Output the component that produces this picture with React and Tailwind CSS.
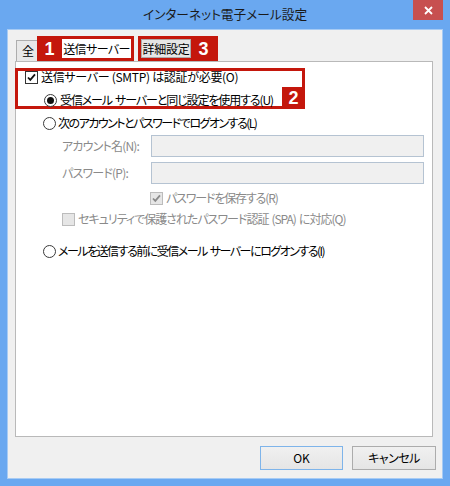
import React from 'react';

// インターネット電子メール設定 ダイアログ（送信サーバー タブ）
const jp = "font-['Noto_Sans_CJK_JP','Noto_Sans',sans-serif] [font-feature-settings:'palt']";

function Check({ disabled = false, checked = false }) {
  return (
    <span
      className={`flex h-[13px] w-[13px] shrink-0 items-center justify-center border ${
        disabled ? 'border-[#bcbcbc] bg-[#e6e6e6]' : 'border-[#333333] bg-white'
      }`}
    >
      {checked && (
        <svg width="9" height="9" viewBox="0 0 9 9" fill="none">
          <path
            d="M1 4.5l2.3 2.4L8 1.4"
            stroke={disabled ? '#8a8a8a' : '#111'}
            strokeWidth="1.8"
          />
        </svg>
      )}
    </span>
  );
}

function Radio({ checked = false }) {
  return (
    <span className="flex h-[13px] w-[13px] shrink-0 items-center justify-center rounded-full border border-[#3a3a3a] bg-white">
      {checked && <span className="h-[7px] w-[7px] rounded-full bg-[#111]" />}
    </span>
  );
}

function Badge({ n }) {
  return (
    <span className="flex h-full w-[25px] shrink-0 items-center justify-center font-['Liberation_Sans',sans-serif] text-[18px] font-black leading-none text-white">
      {n}
    </span>
  );
}

export default function App() {
  return (
    <div className={`flex h-[486px] w-[450px] flex-col bg-[#6aa8f0] text-[12px] text-black ${jp}`}>
      {/* title bar */}
      <div className="relative flex h-[29px] shrink-0 items-center justify-center">
        <span className="text-[12.7px] leading-none text-[#1a1a1a]">インターネット電子メール設定</span>
        <span className="absolute right-[7px] top-0 flex h-[20px] w-[30px] items-center justify-center bg-[#c75050]">
          <svg width="9" height="9" viewBox="0 0 9 9">
            <path d="M1 1l7 7M8 1L1 8" stroke="#fff" strokeWidth="1.8" />
          </svg>
        </span>
      </div>

      <div className="mx-[7px] mb-[7px] flex flex-1 flex-col border border-[#a7cbf4] bg-[#f0f0f0]">
        {/* tabs */}
        <div className="mt-[6px] flex h-[25px] items-end">
          <div className="ml-[8px] flex h-[21px] w-[21px] items-center border-l border-t border-[#adadad] bg-[#e8e8e8] pl-[5px] leading-none">
            全
          </div>
          <div className="flex h-[25px] w-[97px] items-stretch self-start bg-[#c4170c]">
            <Badge n="1" />
            <span className="my-[3px] mr-[3px] flex flex-1 items-center justify-center whitespace-nowrap bg-white leading-none tracking-[-0.6px]">
              送信サーバー
            </span>
          </div>
          <div className="ml-[4px] flex h-[25px] w-[80px] items-stretch self-start bg-[#c4170c]">
            <span className="my-[3px] ml-[3px] flex w-[50px] items-center justify-center whitespace-nowrap border border-[#acacac] bg-[#e6e6e6] leading-none tracking-[-0.3px]">
              詳細設定
            </span>
            <Badge n="3" />
          </div>
        </div>

        {/* panel */}
        <div className="ml-[7px] mr-[9px] flex h-[376px] flex-col whitespace-nowrap border border-[#b9b9b9] bg-white">
          <div className="relative -ml-px mt-[6px] w-[290px] border-[3px] border-[#c4170c]">
            <div className="flex h-[12px] items-center gap-[3px] pl-[7px] leading-none">
              <Check checked />
              <span className="tracking-[-0.3px]">送信サーバー (SMTP) は認証が必要(O)</span>
            </div>
            <div className="mt-[11px] flex h-[12px] items-center gap-[3px] pl-[26px] leading-none">
              <Radio checked />
              <span className="tracking-[-1.1px]">
                受信メール<span className="ml-[3px]">サーバーと同じ設定を使用する(U)</span>
              </span>
            </div>
            <span className="absolute -bottom-[3px] -right-[3px] flex h-[22px] w-[23px] items-center justify-center bg-[#c4170c] font-['Liberation_Sans',sans-serif] text-[18px] font-black leading-none text-white">
              2
            </span>
          </div>

          <div className="mt-[4px] flex h-[20px] items-center gap-[2px] pl-[27px] leading-none">
            <Radio />
            <span className="tracking-[-1.5px]">次のアカウントとパスワードでログオンする(L)</span>
          </div>

          <div className="mt-[2px] flex h-[22px] items-center pl-[46px] pr-[8px] leading-none text-[#8a8a8a]">
            <span className="w-[89px] shrink-0 tracking-[-0.8px]">アカウント名(N):</span>
            <span className="h-full flex-1 border border-[#b5c3d2] bg-[#f0f0f0]" />
          </div>
          <div className="mt-[5px] flex h-[22px] items-center pl-[46px] pr-[8px] leading-none text-[#8a8a8a]">
            <span className="w-[89px] shrink-0 tracking-[-0.8px]">パスワード(P):</span>
            <span className="h-full flex-1 border border-[#b5c3d2] bg-[#f0f0f0]" />
          </div>

          <div className="mt-[4px] flex h-[20px] items-center gap-[3px] pl-[134px] leading-none text-[#8a8a8a]">
            <Check disabled checked />
            <span className="tracking-[-1.15px]">パスワードを保存する(R)</span>
          </div>
          <div className="mt-[1px] flex h-[20px] items-center gap-[3px] pl-[46px] leading-none text-[#8a8a8a]">
            <Check disabled />
            <span className="tracking-[-1px]">
              セキュリティで保護されたパスワード認証<span className="ml-[3px]">(SPA)</span>
              <span className="ml-[3px]">に対応(Q)</span>
            </span>
          </div>

          <div className="mt-[12px] flex h-[20px] items-center gap-[2px] pl-[27px] leading-none">
            <Radio />
            <span className="tracking-[-1.5px]">
              メールを送信する前に受信メール<span className="ml-[3px]">サーバーにログオンする(I)</span>
            </span>
          </div>
        </div>

        {/* buttons */}
        <div className="mr-[6px] mt-[9px] flex justify-end gap-[9px]">
          <button className="flex h-[24px] w-[83px] items-center justify-center border border-[#7eb4ea] bg-gradient-to-b from-[#f0f0f0] to-[#e5e5e5] leading-none">
            OK
          </button>
          <button className="flex h-[24px] w-[84px] items-center justify-center border border-[#acacac] bg-gradient-to-b from-[#f0f0f0] to-[#e5e5e5] leading-none tracking-[-0.5px]">
            キャンセル
          </button>
        </div>
      </div>
    </div>
  );
}
